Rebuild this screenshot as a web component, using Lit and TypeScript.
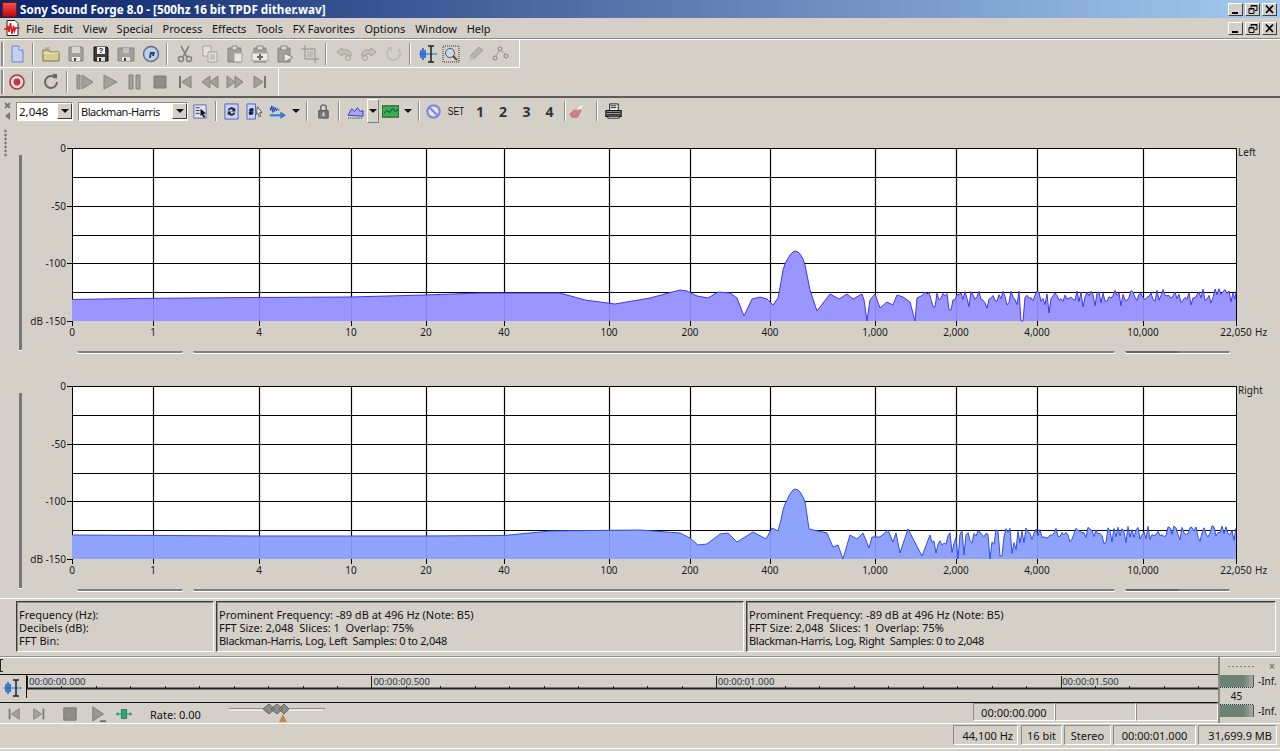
import { LitElement, html, svg, css } from 'lit';
import { customElement, property } from 'lit/decorators.js';

// icons are drawn on an 18x18 box
const ico = (body: unknown, cls = '') => html`<svg class="ico ${cls}" viewBox="0 0 18 18">${body}</svg>`;

const G = '#a3a19b'; // disabled grey
const GD = '#85837e';

const ICONS: Record<string, unknown> = {
  newDoc: svg`<path d="M4 1h7l4 4v12H4z" fill="#c4d0f2" stroke="#7080d0"/><path d="M11 1v4h4" fill="#fff" stroke="#7080d0"/>`,
  open: svg`<path d="M1 5h6l1 2h9v9H1z" fill="#d8cc96" stroke="#7f7040"/><path d="M1 8h16" stroke="#f0e8c0"/><path d="M3 3h5" stroke="#a39660"/>`,
  save: svg`<path d="M2 2h13l1 1v13H2z" fill="${G}" stroke="${GD}"/><path d="M5 2h8v6H5z" fill="#d8d6d0"/><path d="M5 12h8v4H5z" fill="#ece9e4"/><path d="M7 13h2v3H7z" fill="#444"/>`,
  saveAs: svg`<path d="M2 2h13l1 1v13H2z" fill="#3c3c3c" stroke="#111"/><path d="M5 2h8v7H5z" fill="#f4f4f4"/><text x="9" y="8.400" class="q">?</text><path d="M5 12h8v4H5z" fill="#ddd"/><path d="M7 13h2v3H7z" fill="#222"/>`,
  saveJoin: svg`<path d="M1 3h16v13H1z" fill="${G}" stroke="${GD}"/><path d="M6 3v5h6V3" fill="#c4c2bc"/><path d="M5 12h8v4H5z" fill="#e0ded8"/><path d="M7 13h2v3H7z" fill="#444"/>`,
  publish: svg`<circle cx="9" cy="9" r="7.500" fill="#bcd0e4" stroke="#5a6a88" stroke-width="1.400"/><path d="M7 13l1-6h5l-1 4h-2l.5-2H9.500l-.6 4z" fill="#2f4368"/>`,
  cut: svg`<path d="M5 1l6 11M13 1L7 12" stroke="${GD}" stroke-width="1.600" fill="none"/><circle cx="5" cy="14" r="2.500" fill="none" stroke="${GD}" stroke-width="1.500"/><circle cx="13" cy="14" r="2.500" fill="none" stroke="${GD}" stroke-width="1.500"/>`,
  copy: svg`<path d="M2 1h8v10H2z" fill="#e4e2dc" stroke="${G}"/><path d="M7 7h9v10H7z" fill="#e4e2dc" stroke="${G}"/><path d="M9 10h5M9 12h5M9 14h5" stroke="${G}"/>`,
  paste: svg`<path d="M2 3h13v14H2z" fill="${G}" stroke="${GD}"/><path d="M6 1h5v4H6z" fill="#dcdad4" stroke="${GD}"/><path d="M8 8h8v9H8z" fill="#e8e6e0" stroke="${G}"/>`,
  pasteNew: svg`<path d="M3 3h12v14H3z" fill="${G}" stroke="${GD}"/><path d="M6 1h6v4H6z" fill="#dcdad4" stroke="${GD}"/><path d="M1 8h16v8H1z" fill="#eceae4" stroke="${G}"/><path d="M9 9v6M6 12h6" stroke="#6a6864" stroke-width="2"/>`,
  pasteMix: svg`<path d="M2 3h12v14H2z" fill="${G}" stroke="${GD}"/><path d="M5 1h6v4H5z" fill="#dcdad4" stroke="${GD}"/><path d="M8 8l9 4.500L8 17z" fill="#eceae4" stroke="${GD}"/>`,
  crop: svg`<path d="M4 0v14h14M0 4h14v14" fill="none" stroke="${G}" stroke-width="1.400"/><path d="M6 6h6v6H6z" fill="#bebcb6"/>`,
  undo: svg`<path d="M2 7l5-4v2h6l3 3v3h-3l-2-2H7v2z" fill="#c2c0ba" stroke="${G}"/><circle cx="13" cy="13" r="2.500" fill="none" stroke="${G}"/>`,
  redo: svg`<path d="M16 7l-5-4v2H5L2 8v3h3l2-2h4v2z" fill="#c2c0ba" stroke="${G}"/><circle cx="5" cy="13" r="2.500" fill="none" stroke="${G}"/>`,
  repeat: svg`<path d="M4 4a6.500 6.500 0 1 0 9 0" fill="none" stroke="#bebcb6" stroke-width="2"/><path d="M2 2h5v5z" fill="#bebcb6"/>`,
  editTool: svg`<path d="M0 9h18" stroke="#2fa0e0" stroke-width="1.500"/><path d="M2 5v8M4 3v12M6 5v8" stroke="#2060d0" stroke-width="1.600"/><path d="M9 1h6M9 17h6M12 1v16" stroke="#222" stroke-width="1.500"/>`,
  magnify: svg`<path d="M1 1h16v16H1z" fill="none" stroke="#333" stroke-dasharray="1 1"/><circle cx="8" cy="8" r="4.500" fill="#c8d8e8" stroke="#556"/><path d="M11 11l4 4" stroke="#445" stroke-width="2"/>`,
  pencil: svg`<path d="M3 15l1-5 8-8 4 3-8 8z" fill="#b4b2ac" stroke="${G}"/><path d="M1 17l3-6 4 3z" fill="#c2c0ba"/>`,
  envelope: svg`<path d="M3 13l5-9 6 6" fill="none" stroke="${G}"/><circle cx="3" cy="13" r="2" fill="#d4d0c8" stroke="${GD}"/><circle cx="8" cy="4" r="2" fill="#d4d0c8" stroke="${GD}"/><circle cx="14" cy="11" r="2" fill="#d4d0c8" stroke="${GD}"/>`,
  record: svg`<circle cx="9" cy="9" r="7" fill="#e8d8d8" stroke="#a83838" stroke-width="1.600"/><circle cx="9" cy="9" r="3.400" fill="#b83a4a"/>`,
  loop: svg`<path d="M13.500 5a6 6 0 1 0 1.500 4" fill="none" stroke="#666" stroke-width="2"/><path d="M10 1h5v5z" fill="#666"/>`,
  playAll: svg`<path d="M1 2h3v14H1z" fill="${G}" stroke="${GD}"/><path d="M6 2l11 7-11 7z" fill="${G}" stroke="${GD}"/>`,
  play: svg`<path d="M3 2l13 7-13 7z" fill="${G}" stroke="${GD}"/>`,
  pause: svg`<path d="M3 2h4v14H3zM10 2h4v14h-4z" fill="${G}" stroke="${GD}"/>`,
  stop: svg`<path d="M3 3h12v12H3z" fill="#8f8d88" stroke="#7d7b76"/>`,
  toStart: svg`<path d="M3 3h2v12H3z" fill="#777"/><path d="M15 3v12L6 9z" fill="${G}" stroke="${GD}"/>`,
  rewind: svg`<path d="M9 3v12L1 9zM17 3v12L9 9z" fill="${G}" stroke="${GD}"/>`,
  forward: svg`<path d="M9 3v12l8-6zM1 3v12l8-6z" fill="${G}" stroke="${GD}"/>`,
  toEnd: svg`<path d="M13 3h2v12h-2z" fill="#777"/><path d="M3 3v12l9-6z" fill="${G}" stroke="${GD}"/>`,
  pickOpt: svg`<path d="M2 2h13v14H2z" fill="#dce4f4" stroke="#5a6ab0"/><path d="M4 5h4M4 8h4M4 11h4" stroke="#333"/><path d="M9 6l6 5-3 .5 2 3-1.500 1-2-3L9 14z" fill="#111"/>`,
  sync: svg`<path d="M2 1h14v16H2z" fill="#c8d4f4" stroke="#5060c0"/><path d="M5 8a4 4 0 0 1 7-2l1-1v4H9l1.500-1.500A2.500 2.500 0 0 0 6.500 8zM13 10a4 4 0 0 1-7 2l-1 1V9h4l-1.500 1.500a2.500 2.500 0 0 0 4 -.5z" fill="#223"/>`,
  syncCur: svg`<path d="M1 1h9v16H1z" fill="#c8d4f4" stroke="#5060c0"/><path d="M3 8a3 3 0 0 1 5-2v3H5zM8 10a3 3 0 0 1-5 2V9h3z" fill="#223"/><path d="M12 4l5 6-2.500 0 1 4-1.500 .5-1.500-4L11 12z" fill="#eee" stroke="#555"/>`,
  sendTo: svg`<path d="M1 5l1 3 1-5 1 7 1-6 1 5 1-4 1 3 1-2 1 2 1-1" fill="none" stroke="#2040c8"/><path d="M1 13h12" stroke="#3a88d8" stroke-width="2.500"/><path d="M12 9l6 4-6 4z" fill="#3a78d8"/>`,
  lock: svg`<path d="M6 8V5a3 3 0 0 1 6 0v3" fill="none" stroke="#666" stroke-width="1.500"/><path d="M4 8h10v8H4z" fill="#777" stroke="#555"/><path d="M8 10h2v4H8z" fill="#ddd"/>`,
  area: svg`<path d="M1 13l4-7 3 3 3-4 3 4 3-1v6z" fill="#a8a4f0" stroke="#3c38c0"/><path d="M1 16h16" stroke="#223" stroke-dasharray="1 1"/>`,
  green: svg`<path d="M0 3h18v12H0z" fill="#36b050" stroke="#2a3a30"/><path d="M2 11l3-3 3 2 3-4 3 3 3-2" fill="none" stroke="#224" stroke-width="1"/>`,
  ban: svg`<circle cx="9" cy="9" r="6.500" fill="#e4e4fa" stroke="#8088e0" stroke-width="2.400"/><path d="M4.500 4.500l9 9" stroke="#8088e0" stroke-width="2.400"/>`,
  eraser: svg`<path d="M1 12l5-5h7l-4 8H3z" fill="#d08088" stroke="#b87078"/><path d="M6 7l6-5h5l-4 5z" fill="#eeeae6" stroke="#c4c2bc"/>`,
  printer: svg`<path d="M5 1h9v7H5z" fill="#fff" stroke="#111"/><path d="M6 3h6M6 5h6" stroke="#111"/><path d="M1 8h16v6H1z" fill="#bbb" stroke="#111" stroke-width="1.400"/><path d="M2 10h14M2 12h14" stroke="#111"/><path d="M3 14h12v2H3z" fill="#fff" stroke="#111"/>`,
  tStop: svg`<path d="M2 2h14v14H2z" fill="#8f8d88" stroke="#777"/>`,
  tPlay: svg`<path d="M2 1l12 8-12 8z" fill="#9a9892" stroke="#777"/><path d="M10 17h7" stroke="#333" stroke-width="1.200"/>`,
  tGreen: svg`<path d="M0 9h18" stroke="#2fa078"/><circle cx="2" cy="9" r="1.700" fill="#2fa078"/><circle cx="16" cy="9" r="1.700" fill="#2fa078"/><path d="M6 4h6v10H6z" fill="#2fa078" stroke="#1e7e5e"/>`,
};

const MENU = ['File', 'Edit', 'View', 'Special', 'Process', 'Effects', 'Tools', 'FX Favorites', 'Options', 'Window', 'Help'];
const FREQS = [[153, '1'], [259, '4'], [351, '10'], [426, '20'], [504, '40'], [609, '100'], [690, '200'], [770, '400'], [875, '1,000'], [956, '2,000'], [1037, '4,000'], [1143, '10,000']] as [number, string][];

type Pt = [number, number];

const LEFT_PTS: Pt[] = [[72, 299.500], [133, 298.500], [255, 297.500], [350, 297], [425, 295], [480, 293], [530, 293], [560, 293], [585, 300], [615, 304], [650, 298], [680, 290], [687, 291], [697, 296], [708, 298], [718, 292], [730, 293], [737, 298], [744, 316], [752, 299], [760, 297], [767, 299], [773, 305], [778, 298], [781, 282], [783, 270], [785, 264], [787, 260], [790, 255], [793, 252], [795, 251], [798, 252], [800, 254], [803, 259], [805, 265], [807, 275], [810, 290], [817, 311], [830, 294], [839, 299], [847, 294], [853, 299], [862, 294], [864, 300], [867, 321], [870, 300], [875, 294], [880, 308], [887, 302], [893, 305], [897, 295], [903, 297], [910, 302], [915, 321], [917, 298], [923, 295]];
const RIGHT_PTS: Pt[] = [[72, 535], [259, 536], [420, 536], [504, 535.500], [550, 531], [640, 530], [680, 533], [690, 538], [698, 545], [707, 544], [720, 534], [728, 533], [737, 542], [753, 532], [766, 539], [772, 528], [778, 531], [781, 520], [783, 510], [785, 504], [787, 500], [790, 494], [793, 490], [795, 489], [798, 490], [800, 492], [803, 497], [805, 502], [807, 515], [809, 529], [827, 533], [833, 547], [838, 545], [843, 559], [850, 535], [857, 539], [863, 533], [869, 548], [872, 537], [880, 537], [888, 530], [893, 542], [896, 533], [900, 553], [908, 529], [922, 556], [930, 535]];

// noisy tail of the spectrum, seeded so both runs look the same
function noise(start: number, seed: number, top0: number, top1: number, range: number, deep: Record<number, number>, deepBefore: number, base: number): Pt[] {
  const out: Pt[] = [];
  let s = seed;
  const rnd = () => (s = (s * 16807) % 2147483647) / 2147483647;
  for (let x = start; x < 1236; x += 2) {
    const t = (x - start) / (1236 - start);
    const top = top0 + (top1 - top0) * t;
    let y = top + rnd() * range;
    if (rnd() > 0.9) y = top + range + rnd() * 5;
    if (x < deepBefore && rnd() > 0.84) y = top + range + rnd() * (base - top - range - 1);
    const key = Math.round(x);
    for (const k of Object.keys(deep)) if (Math.abs(+k - key) < 2) y = deep[+k];
    out.push([x, y]);
  }
  out.push([1236, top1 + 3]);
  return out;
}

const LEFT = [...LEFT_PTS, ...noise(925, 77, 292, 288, 12, { 1022: 321, 1049: 313, 950: 310 }, 0, 321)];
const RIGHT = [...RIGHT_PTS, ...noise(932, 4242, 529, 525, 12, { 958: 559, 990: 559, 1001: 556 }, 1050, 557)];

@customElement('spectrum-chart')
export class SpectrumChart extends LitElement {
  @property({ type: Number }) top = 148;
  @property() side = 'Left';
  @property({ attribute: false }) pts: Pt[] = [];
  @property() fill = '#9a95ff';
  @property() line = '#3f37ea';

  static styles = css`
    :host { display: flex; }
    .gutter { width: 24px; flex: none; padding-left: 19px; box-sizing: border-box; }
    .slider { width: 3px; height: 195px; margin-top: 15px; background: #777; border-bottom: 1px solid #fff; }
    .body { width: 1256px; }
    svg { display: block; }
    text { font: 10px "Noto Sans", sans-serif; fill: #1a1a1a; }
    .scroll { display: flex; gap: 10px; padding-left: 53px; margin-top: 2px; }
    .seg { height: 0; border-top: 2px solid #808080; border-bottom: 1px solid #fff; border-right: 1px solid #fff; border-left: 1px solid #fff; }
    .s1 { width: 104px; }
    .s2 { width: 920px; }
    .s3 { width: 103px; }
    .thumb { width: 53px; height: 2px; margin-top: -2px; background: #666; }
  `;

  render() {
    const t = this.top;
    const b = t + 173;
    const step = 173 / 6;
    const area = `M72 ${b} ` + this.pts.map(p => `L${p[0]} ${p[1]}`).join(' ') + ` L1236 ${b} Z`;
    const outline = 'M' + this.pts.map(p => `${p[0]} ${p[1]}`).join(' L');
    return html`
      <div class="gutter"><div class="slider"></div></div>
      <div class="body">
        <svg width="1256" height="209" viewBox="24 ${t - 8} 1256 209">
          <rect x="72" y=${t} width="1164" height="173" fill="#fff"></rect>
          ${[0, 1, 2, 3, 4, 5].map(i => svg`<path d="M72 ${Math.round(t + i * step) + 0.5}H1236" stroke="#000" stroke-width="1.200"></path>`)}
          ${FREQS.map(f => svg`<path d="M${f[0] + 0.5} ${t}V${b}" stroke="#000" stroke-width="1.200"></path>`)}
          <path d="M72.500 ${t}V${b}M1236.500 ${t}V${b}" stroke="#000"></path>
          <path d=${area} fill=${this.fill}></path>
          ${FREQS.map(f => svg`<path d="M${f[0] + 0.5} ${b - 45}V${b}" stroke="#000" opacity=".1"></path>`)}
          <path d=${outline} fill="none" stroke=${this.line} stroke-width="1"></path>
          ${[[0, '0'], [2, '-50'], [4, '-100'], [6, 'dB -150']].map(([i, l]) => svg`
            <path d="M67 ${Math.round(t + (i as number) * step) + 0.5}H72" stroke="#000"></path>
            <text x="66" y=${Math.round(t + (i as number) * step) + 3.5} text-anchor="end">${l}</text>`)}
          <path d="M1236.500 ${b}v5" stroke="#000"></path>
          <path d="M72.500 ${b}v5" stroke="#000"></path>
          ${FREQS.map(f => svg`<path d="M${f[0] + 0.5} ${b}v5" stroke="#000"></path><text x=${f[0]} y=${b + 14.5} text-anchor="middle">${f[1]}</text>`)}
          <text x="72" y=${b + 14.5} text-anchor="middle">0</text>
          <text x="1236" y=${b + 14.5} text-anchor="middle">22,050</text>
          <text x="1255" y=${b + 14.5}>Hz</text>
          <text x="1238" y=${t + 8}>${this.side}</text>
        </svg>
        <div class="scroll">
          <div class="seg s1"></div>
          <div class="seg s2"></div>
          <div class="seg s3"><div class="thumb"></div></div>
        </div>
      </div>
    `;
  }
}

@customElement('app-root')
export class AppRoot extends LitElement {
  static styles = css`
    :host { display: block; width: 1280px; height: 751px; overflow: hidden; background: #d4d0c8; font: 11px "Noto Sans", sans-serif; color: #111; }
    .ico { width: 18px; height: 18px; display: block; }
    .q { font: bold 8px "Liberation Sans", sans-serif; text-anchor: middle; fill: #111; }

    .title { height: 18px; display: flex; align-items: center; background: linear-gradient(90deg, #0a246a, #a6caf0); color: #fff; font: bold 11.700px "Noto Sans", sans-serif; }
    .appicon { width: 15px; height: 15px; margin: 0 3px 0 2px; background: linear-gradient(#f05050, #c00c0c); border: 1px solid #801010; box-sizing: border-box; }
    .winbtns { margin-left: auto; display: flex; gap: 2px; padding-right: 3px; }
    .wb { width: 15px; height: 13px; background: #d4d0c8; border: 1px solid; border-color: #fff #404040 #404040 #fff; box-sizing: border-box; display: flex; }
    .wb svg { width: 13px; height: 11px; display: block; }

    .menu { height: 20px; display: flex; align-items: center; }
    .docicon { width: 16px; height: 16px; margin: 0 1px 0 4px; }
    .mi { padding: 0 4.900px; }
    .menu .winbtns { margin-top: 1px; }

    .bars { height: 57px; border-top: 1px solid #8c8a84; box-shadow: inset 0 1px 0 #fff; border-bottom: 2px solid #5e5c58; }
    .tb { display: flex; align-items: center; height: 28px; box-sizing: border-box; padding-left: 1px; }
    .tb1 { width: 520px; margin-top: 1px; border-right: 1px solid #fff; border-bottom: 1px solid #fff; }
    .tb2 { width: 279px; border-right: 1px solid #fff; }
    .grip { width: 2px; height: 24px; background: #8f8d88; border-right: 1px solid #fff; flex: none; }
    .cell { width: 25px; display: flex; justify-content: center; flex: none; }
    .cell.on { width: 21px; margin: 0 0 0 2px; height: 22px; align-items: center; background: #fff; background-image: radial-gradient(#d4d0c8 1px, transparent 1px); background-size: 2px 2px; }
    .sep { width: 1px; height: 22px; background: #8f8d88; border-right: 1px solid #fff; margin: 0 4px 0 3px; flex: none; }

    .spec { height: 26px; display: flex; align-items: center; }
    .spec .ico { width: 17px; height: 17px; }
    .mini { width: 16px; height: 22px; flex: none; display: block; }
    .combo { height: 19px; background: #fff; border: 1px solid #8f8d88; border-right-color: #fff; border-bottom-color: #fff; box-sizing: border-box; display: flex; align-items: center; padding-left: 2px; justify-content: space-between; flex: none; }
    .cb1 { width: 57px; margin-right: 5px; font-size: 11.500px; }
    .cb2 { width: 110px; letter-spacing: -.45px; }
    .drop { width: 15px; height: 16px; background: #d4d0c8; border: 1px solid; border-color: #fff #404040 #404040 #fff; box-sizing: border-box; display: flex; align-items: center; justify-content: center; }
    .arrow { width: 0; height: 0; border-left: 4px solid transparent; border-right: 4px solid transparent; border-top: 4px solid #111; flex: none; }
    .sc { display: flex; justify-content: center; flex: none; align-items: center; }
    .w14 { width: 14px; } .w20 { width: 20px; } .w22 { width: 22px; } .w23 { width: 23px; } .w24 { width: 24px; }
    .w26 { width: 26px; } .w28 { width: 28px; } .w36 { width: 36px; }
    .start { justify-content: flex-start; }
    .ssep { width: 1px; height: 20px; background: #8f8d88; border-right: 1px solid #fff; flex: none; margin: 0 3px; }
    .areabox { width: 24px; height: 24px; background: #fff; background-image: radial-gradient(#d4d0c8 1px, transparent 1px); background-size: 2px 2px; display: flex; align-items: center; justify-content: center; flex: none; }
    .areadrop { width: 12px; height: 24px; border: 1px solid; border-color: #fff #808080 #808080 #fff; box-sizing: border-box; display: flex; align-items: center; justify-content: center; flex: none; }
    .set { font: 10px "Liberation Sans", sans-serif; transform: scaleX(.85); }
    .num { font: bold 14px "Noto Sans", sans-serif; color: #333; }

    .main { position: relative; padding: 16px 0 6px; }
    .dots { position: absolute; left: 4px; top: 5px; width: 3px; height: 28px; background-image: radial-gradient(#777 1px, transparent 1.200px); background-size: 3px 4px; }
    .first { margin-bottom: 24px; }

    .info { display: flex; gap: 2px; padding: 2px 4px 0 16px; height: 51px; border-top: 1px solid #fff; margin-bottom: 4px; }
    .ib { height: 51px; box-sizing: border-box; border: 1px solid; border-color: #3c3c3c #fff #fff #3c3c3c; box-shadow: inset 1px 1px 0 #8f8d88; padding: 6px 0 0 2px; line-height: 13px; white-space: pre; }
    .ib1 { width: 198px; } .ib2 { width: 528px; } .ib3 { width: 530px; }
    .tight { letter-spacing: -.3px; }

    .trans { display: flex; height: 66px; border-top: 1px solid #8f8d88; box-shadow: inset 0 1px 0 #fff; border-bottom: 1px solid #fff; }
    .tl { width: 1218px; flex: none; }
    .strip { height: 15px; }
    .bracket { width: 2px; height: 11px; margin-top: 2px; border: 1px solid #222; border-right: 0; }
    .ruler { display: block; }
    .ruler text { font: 9.500px "Noto Sans", sans-serif; fill: #23364f; }
    .ctrl { display: flex; align-items: center; height: 22px; padding-left: 2px; }
    .ctrl .ico { width: 16px; height: 16px; }
    .rate { margin-left: 12px; width: 79px; flex: none; }
    .slide { width: 96px; height: 20px; display: block; flex: none; }
    .cnt { margin-left: auto; display: flex; align-self: flex-start; }
    .cbox { height: 18px; width: 81.670px; box-sizing: border-box; border: 1px solid; border-color: #8f8d88 #fff #fff #8f8d88; display: flex; align-items: center; justify-content: center; }
    .tr { width: 62px; flex: none; border-left: 2px solid #8f8d88; box-sizing: border-box; display: flex; flex-direction: column; padding-top: 4px; }
    .trtop { display: flex; align-items: center; height: 11px; padding-left: 7px; margin-bottom: 3px; }
    .griph { width: 28px; height: 3px; background-image: radial-gradient(#777 1px, transparent 1.200px); background-size: 4px 3px; }
    .xx { margin-left: 14px; font: bold 10px "Liberation Sans", sans-serif; color: #777; }
    .mrow { display: flex; align-items: center; gap: 4px; height: 12px; font-size: 10px; }
    .meter { width: 33px; height: 12px; background: linear-gradient(90deg, #6b8276 70%, #a6aca2); border-right: 1px solid #555; flex: none; }
    .sc45 { width: 33px; height: 16px; margin: 0; text-align: center; font-size: 10px; line-height: 16px; border-top: 1px dotted #333; border-bottom: 1px dotted #333; }

    .status { display: flex; gap: 2px; justify-content: flex-end; padding: 1px 3px 0 0; height: 25px; box-sizing: border-box; border-bottom: 1px solid #fff; }
    .sb { height: 20px; box-sizing: border-box; border: 1px solid; border-color: #8f8d88 #fff #fff #8f8d88; display: flex; align-items: center; justify-content: center; }
    .right { justify-content: flex-end; padding-right: 4px; }
    .sw1 { width: 65px; margin-right: 1px; } .sw2 { width: 41px; } .sw3 { width: 47px; } .sw4 { width: 83px; } .sw5 { width: 79px; }
  `;

  winBtns() {
    return html`<div class="winbtns">
      <div class="wb"><svg viewBox="0 0 13 11"><path d="M3 8h6v2H3z" fill="#000"/></svg></div>
      <div class="wb"><svg viewBox="0 0 13 11"><path d="M5 1.500h6v5h-2M5 1.500v2M3 4.500h5v5H3z" fill="none" stroke="#000"/><path d="M5 1h6v1.500H5zM3 4h5v1.500H3z"/></svg></div>
      <div class="wb"><svg viewBox="0 0 13 11"><path d="M3 1.500l7 7.500M10 1.500L3 9" stroke="#000" stroke-width="1.700"/></svg></div>
    </div>`;
  }

  cells(names: string[]) {
    return names.map(n => (n === '|' ? html`<div class="sep"></div>` : html`<div class="cell">${ico(ICONS[n])}</div>`));
  }

  render() {
    const ticks: number[] = [];
    for (let x = 27; x < 1218; x += 34.45) ticks.push(x);
    return html`
      <div class="title">
        <div class="appicon"></div>
        Sony Sound Forge 8.0 - [500hz 16 bit TPDF dither.wav]
        ${this.winBtns()}
      </div>
      <div class="menu">
        <svg class="docicon" viewBox="0 0 16 16"><path d="M3 .5h8l3 3v12H3z" fill="#fff" stroke="#222"/><path d="M0 9h3l1-3 1 6 1.500-9 1.500 11 1.500-8 1 5 1-3h4" fill="none" stroke="#d81818" stroke-width="1.500"/></svg>
        ${MENU.map(m => html`<span class="mi">${m}</span>`)}
        ${this.winBtns()}
      </div>
      <div class="bars">
        <div class="tb tb1">
          <div class="grip"></div>
          ${this.cells(['newDoc', '|', 'open', 'save', 'saveAs', 'saveJoin', 'publish', '|', 'cut', 'copy', 'paste', 'pasteNew', 'pasteMix', 'crop', '|', 'undo', 'redo', 'repeat', '|'])}
          <div class="cell on">${ico(ICONS.editTool)}</div>
          ${this.cells(['magnify', 'pencil', 'envelope'])}
        </div>
        <div class="tb tb2">
          <div class="grip"></div>
          ${this.cells(['record', '|', 'loop', '|', 'playAll', 'play', 'pause', 'stop', 'toStart', 'rewind', 'forward', 'toEnd'])}
        </div>
      </div>
      <div class="spec">
        <svg class="mini" viewBox="0 0 16 22"><path d="M5 3l5 5M10 3L5 8" stroke="#777" stroke-width="1.800"/><path d="M10 12v8l-5-4z" fill="#777"/></svg>
        <div class="combo cb1">2,048<div class="drop"><div class="arrow"></div></div></div>
        <div class="combo cb2">Blackman-Harris<div class="drop"><div class="arrow"></div></div></div>
        <div class="sc w24">${ico(ICONS.pickOpt)}</div>
        <div class="ssep"></div>
        <div class="sc w23">${ico(ICONS.sync)}</div>
        <div class="sc w23">${ico(ICONS.syncCur)}</div>
        <div class="sc w23">${ico(ICONS.sendTo)}</div>
        <div class="sc w14"><div class="arrow"></div></div>
        <div class="ssep"></div>
        <div class="sc w24">${ico(ICONS.lock)}</div>
        <div class="ssep"></div>
        <div class="areabox">${ico(ICONS.area)}</div>
        <div class="areadrop"><div class="arrow"></div></div>
        <div class="sc w22">${ico(ICONS.green)}</div>
        <div class="sc w14"><div class="arrow"></div></div>
        <div class="ssep"></div>
        <div class="sc w20">${ico(ICONS.ban)}</div>
        <div class="sc w26 set">SET</div>
        <div class="sc w22 num">1</div>
        <div class="sc w24 num">2</div>
        <div class="sc w23 num">3</div>
        <div class="sc w23 num">4</div>
        <div class="ssep"></div>
        <div class="sc w24 start">${ico(ICONS.eraser)}</div>
        <div class="ssep"></div>
        <div class="sc w24">${ico(ICONS.printer)}</div>
      </div>
      <div class="main">
        <div class="dots"></div>
        <spectrum-chart class="first" .top=${148} side="Left" .pts=${LEFT} fill="#9a95ff" line="#3f37ea"></spectrum-chart>
        <spectrum-chart .top=${386} side="Right" .pts=${RIGHT} fill="#8fa2fc" line="#2f4ee6"></spectrum-chart>
      </div>
      <div class="info">
        <div class="ib ib1">Frequency (Hz):
Decibels (dB):
FFT Bin:</div>
        <div class="ib ib2">Prominent Frequency: -89 dB at 496 Hz (Note: B5)
FFT Size: 2,048  Slices: 1  Overlap: 75%
<span class="tight">Blackman-Harris, Log, Left  Samples: 0 to 2,048</span></div>
        <div class="ib ib3">Prominent Frequency: -89 dB at 496 Hz (Note: B5)
FFT Size: 2,048  Slices: 1  Overlap: 75%
<span class="tight">Blackman-Harris, Log, Right  Samples: 0 to 2,048</span></div>
      </div>
      <div class="trans">
        <div class="tl">
          <div class="strip"><div class="bracket"></div></div>
          <svg class="ruler" width="1218" height="29" viewBox="0 0 1218 29">
            <path d="M0 .5H1218M0 28.500H1218" stroke="#111"></path>
            <path d="M26 14.500H1218" stroke="#222" stroke-width="2"></path>
            <path d="M26.500 0V24" stroke="#111"></path>
            ${ticks.map((x, i) => svg`<path d="M${Math.round(x) + 0.5} ${i % 10 === 0 ? 2 : 12}V14" stroke="#222"></path>`)}
            ${['00:00:00.000', '00:00:00.500', '00:00:01.000', '00:00:01.500'].map((t, i) => svg`<text x=${29 + i * 344.4} y="11">${t}</text>`)}
            <g transform="translate(4 5)">${ICONS.editTool}</g>
          </svg>
          <div class="ctrl">
            <div class="sc w24">${ico(ICONS.toStart)}</div>
            <div class="sc w26">${ico(ICONS.toEnd)}</div>
            <div class="sc w36">${ico(ICONS.tStop)}</div>
            <div class="sc w22">${ico(ICONS.tPlay)}</div>
            <div class="sc w28">${ico(ICONS.tGreen)}</div>
            <div class="rate">Rate: 0.00</div>
            <svg class="slide" viewBox="0 0 96 20">
              <path d="M0 4.500H96" stroke="#8f8d88"></path>
              <path d="M0 6H40M60 6H94" stroke="#fff"></path>
              <path d="M34 5l6-5 6 5-6 5zM42 5l6-5 6 5-6 5zM50 5l5-5 5 5-5 5z" fill="#8f8d88" stroke="#666"></path>
              <path d="M50 18l4-8 4 8z" fill="#c08850"></path>
            </svg>
            <div class="cnt">
              <div class="cbox">00:00:00.000</div>
              <div class="cbox"></div>
              <div class="cbox"></div>
            </div>
          </div>
        </div>
        <div class="tr">
          <div class="trtop"><div class="griph"></div><span class="xx">×</span></div>
          <div class="mrow"><div class="meter"></div>-Inf.</div>
          <div class="sc45">45</div>
          <div class="mrow"><div class="meter"></div>-Inf.</div>
        </div>
      </div>
      <div class="status">
        <div class="sb right sw1">44,100 Hz</div>
        <div class="sb sw2">16 bit</div>
        <div class="sb sw3">Stereo</div>
        <div class="sb sw4">00:00:01.000</div>
        <div class="sb right sw5">31,699.9 MB</div>
      </div>
    `;
  }
}
